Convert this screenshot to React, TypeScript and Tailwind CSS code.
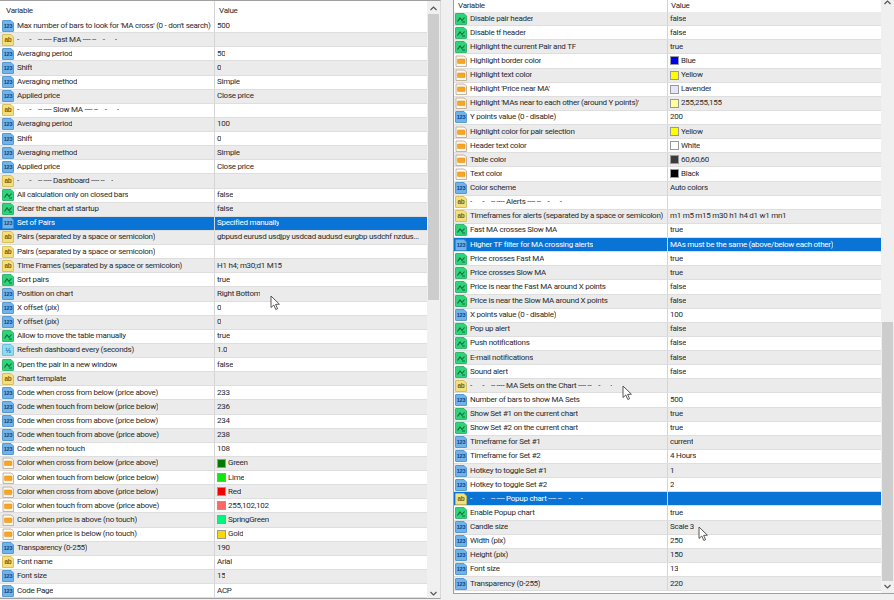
import React from "react";

type Kind = "n" | "a" | "b" | "c" | "d";
type Row = { k: Kind; t: string; v?: string; s?: string; sel?: boolean };

function Icon({ k }: { k: Kind }) {
  if (k === "c") {
    return (
      <svg width="12" height="12" viewBox="0 0 12 12" className="shrink-0">
        <path d="M1 1 H9 L11.5 3 V11.5 H1 Z" fill="#fbf6ee" stroke="#b9a489" strokeWidth=".8" />
        <rect x="2.5" y="4" width="7.5" height="4.5" rx=".5" fill="#f5a623" stroke="#e8881a" strokeWidth=".5" />
      </svg>
    );
  }
  const style = {
    n: { fill: "#6fb3e8", stroke: "#3f8cc9" },
    a: { fill: "#f3e07c", stroke: "#cdb64a" },
    b: { fill: "#2fd47a", stroke: "#1eaa5c" },
    d: { fill: "#8fdcf0", stroke: "#5bb8d6" },
  }[k];
  return (
    <svg width="12" height="12" viewBox="0 0 12 12" className="shrink-0">
      <path d="M.5 1 Q.5 .5 1 .5 H9 L11.5 3 V11 Q11.5 11.5 11 11.5 H1 Q.5 11.5 .5 11 Z" fill={style.fill} stroke={style.stroke} strokeWidth=".8" />
      {k === "b" && <path d="M2.5 8.5 L5 5 L7 7.5 L9.5 4.5 M7 9 H10" fill="none" stroke="#0b6b38" strokeWidth="1.1" />}
      {k === "n" && <text x="6" y="8.2" textAnchor="middle" fontSize="5.5" fontWeight="700" fill="#123f86" fontFamily="Liberation Sans, sans-serif">123</text>}
      {k === "a" && <text x="6" y="8.4" textAnchor="middle" fontSize="6.5" fontWeight="700" fill="#7a6212" fontFamily="Liberation Sans, sans-serif">ab</text>}
      {k === "d" && <text x="6" y="8.6" textAnchor="middle" fontSize="7" fontWeight="700" fill="#1f6fc4" fontFamily="Liberation Sans, sans-serif">½</text>}
    </svg>
  );
}

const left: Row[] = [
  { k: "n", t: "Max number of bars to look for 'MA cross' (0 - don't search)", v: "500" },
  { k: "a", t: "-      -    -- ---- Fast MA ---- --    -      -" },
  { k: "n", t: "Averaging period", v: "50" },
  { k: "n", t: "Shift", v: "0" },
  { k: "n", t: "Averaging method", v: "Simple" },
  { k: "n", t: "Applied price", v: "Close price" },
  { k: "a", t: "-      -    -- ---- Slow MA ---- --    -      -" },
  { k: "n", t: "Averaging period", v: "100" },
  { k: "n", t: "Shift", v: "0" },
  { k: "n", t: "Averaging method", v: "Simple" },
  { k: "n", t: "Applied price", v: "Close price" },
  { k: "a", t: "-      -    -- ---- Dashboard ---- --    -" },
  { k: "b", t: "All calculation only on closed bars", v: "false" },
  { k: "b", t: "Clear the chart at startup", v: "false" },
  { k: "n", t: "Set of Pairs", v: "Specified manually", sel: true },
  { k: "a", t: "Pairs (separated by a space or semicolon)", v: "gbpusd eurusd usdjpy usdcad audusd eurgbp usdchf nzdus..." },
  { k: "a", t: "Pairs (separated by a space or semicolon)" },
  { k: "a", t: "Time Frames (separated by a space or semicolon)", v: "H1 h4; m30;d1 M15" },
  { k: "b", t: "Sort pairs", v: "true" },
  { k: "n", t: "Position on chart", v: "Right Bottom" },
  { k: "n", t: "X offset (pix)", v: "0" },
  { k: "n", t: "Y offset (pix)", v: "0" },
  { k: "b", t: "Allow to move the table manually", v: "true" },
  { k: "d", t: "Refresh dashboard every (seconds)", v: "1.0" },
  { k: "b", t: "Open the pair in a new window", v: "false" },
  { k: "a", t: "Chart template" },
  { k: "n", t: "Code when cross from below (price above)", v: "233" },
  { k: "n", t: "Code when touch from below (price below)", v: "236" },
  { k: "n", t: "Code when cross from above (price below)", v: "234" },
  { k: "n", t: "Code when touch from above (price above)", v: "238" },
  { k: "n", t: "Code when no touch", v: "108" },
  { k: "c", t: "Color when cross from below (price above)", v: "Green", s: "#007a00" },
  { k: "c", t: "Color when touch from below (price below)", v: "Lime", s: "#12e612" },
  { k: "c", t: "Color when cross from above (price below)", v: "Red", s: "#f00000" },
  { k: "c", t: "Color when touch from above (price above)", v: "255,102,102", s: "#ff6666" },
  { k: "c", t: "Color when price is above (no touch)", v: "SpringGreen", s: "#00f57f" },
  { k: "c", t: "Color when price is below (no touch)", v: "Gold", s: "#ffd700" },
  { k: "n", t: "Transparency (0-255)", v: "190" },
  { k: "a", t: "Font name", v: "Arial" },
  { k: "n", t: "Font size", v: "15" },
  { k: "n", t: "Code Page", v: "ACP" },
];

const right: Row[] = [
  { k: "b", t: "Disable pair header", v: "false" },
  { k: "b", t: "Disable tf header", v: "false" },
  { k: "b", t: "Highlight the current Pair and TF", v: "true" },
  { k: "c", t: "Highlight border color", v: "Blue", s: "#0000f0" },
  { k: "c", t: "Highlight text color", v: "Yellow", s: "#ffff00" },
  { k: "c", t: "Highlight 'Price near MA'", v: "Lavender", s: "#e6e6fa" },
  { k: "c", t: "Highlight 'MAs near to each other (around Y points)'", v: "255,255,155", s: "#ffff9b" },
  { k: "n", t: "Y points value (0 - disable)", v: "200" },
  { k: "c", t: "Highlight color for pair selection", v: "Yellow", s: "#ffff00" },
  { k: "c", t: "Header text color", v: "White", s: "#ffffff" },
  { k: "c", t: "Table color", v: "60,60,60", s: "#3c3c3c" },
  { k: "c", t: "Text color", v: "Black", s: "#000000" },
  { k: "n", t: "Color scheme", v: "Auto colors" },
  { k: "a", t: "-      -    -- ---- Alerts ---- --    -      -" },
  { k: "a", t: "Timeframes for alerts (separated by a space or semicolon)", v: "m1 m5 m15 m30 h1 h4 d1 w1 mn1" },
  { k: "b", t: "Fast MA crosses Slow MA", v: "true" },
  { k: "n", t: "Higher TF filter for MA crossing alerts", v: "MAs must be the same (above/below each other)", sel: true },
  { k: "b", t: "Price crosses Fast MA", v: "true" },
  { k: "b", t: "Price crosses Slow MA", v: "true" },
  { k: "b", t: "Price is near the Fast MA around X points", v: "false" },
  { k: "b", t: "Price is near the Slow MA around X points", v: "false" },
  { k: "n", t: "X points value (0 - disable)", v: "100" },
  { k: "b", t: "Pop up alert", v: "false" },
  { k: "b", t: "Push notifications", v: "false" },
  { k: "b", t: "E-mail notifications", v: "false" },
  { k: "b", t: "Sound alert", v: "false" },
  { k: "a", t: "-      -    -- ---- MA Sets on the Chart ---- --    -      -" },
  { k: "n", t: "Number of bars to show MA Sets", v: "500" },
  { k: "b", t: "Show Set #1 on the current chart", v: "true" },
  { k: "b", t: "Show Set #2 on the current chart", v: "true" },
  { k: "n", t: "Timeframe for Set #1", v: "current" },
  { k: "n", t: "Timeframe for Set #2", v: "4 Hours" },
  { k: "n", t: "Hotkey to toggle Set #1", v: "1" },
  { k: "n", t: "Hotkey to toggle Set #2", v: "2" },
  { k: "a", t: "-      -    -- ---- Popup chart ---- --    -      -", sel: true },
  { k: "b", t: "Enable Popup chart", v: "true" },
  { k: "n", t: "Candle size", v: "Scale 3" },
  { k: "n", t: "Width (pix)", v: "250" },
  { k: "n", t: "Height (pix)", v: "150" },
  { k: "n", t: "Font size", v: "13" },
  { k: "n", t: "Transparency (0-255)", v: "220" },
];

function RowView({ r, gray, isRight }: { r: Row; gray: boolean; isRight: boolean }) {
  const bg = r.sel ? "bg-[#0a74d6] text-white" : gray ? "bg-[#ebebeb] text-[#2a2a2a]" : "bg-white text-[#2a2a2a]";
  return (
    <div className={`flex h-[14.125px] items-center overflow-hidden border-b border-[#dedede] ${bg}`}>
      <div className={`flex h-full shrink-0 items-center gap-[3px] ${isRight ? "w-[213px] pl-[1px]" : "w-[214px] pl-[2px]"}`}>
        <Icon k={r.k} />
        <span className="overflow-hidden whitespace-pre">{r.t}</span>
      </div>
      <div className="flex h-full min-w-0 flex-1 items-center gap-[2px] border-l border-[#d4d4d4] pl-[2px]">
        {r.s && <span className="h-[9px] w-[9px] shrink-0 border border-[#9a9a9a]" style={{ background: r.s }} />}
        <span className="overflow-hidden whitespace-pre">{r.v}</span>
      </div>
    </div>
  );
}

function Cursor({ x, y }: { x: number; y: number }) {
  return (
    <svg width="11" height="16" viewBox="0 0 11 16" className="absolute" style={{ left: x, top: y }}>
      <path d="M1 1 V12.5 L3.8 10 L5.8 14.5 L7.6 13.7 L5.6 9.4 L9.4 9.2 Z" fill="#ffffff" stroke="#444444" strokeWidth=".9" />
    </svg>
  );
}

export default function App() {
  return (
    <div className="relative flex h-[600px] w-[894px] overflow-hidden bg-[#f0f0f0] font-['Roboto',sans-serif] text-[8px] leading-none tracking-[-0.27px]">
      <div className="flex h-[599px] w-[441px] shrink-0 flex-col border-y border-r border-[#a0a0a0] border-r-[#d8d8d8]">
        <div className="flex min-h-0 flex-1">
          <div className="min-w-0 flex-1 bg-white">
            <div className="flex h-[18px] items-center text-[#2a2a2a]">
              <div className="w-[214px] pl-[6px] pt-[2px]">Variable</div>
              <div className="h-full flex-1 border-l border-[#d4d4d4] pl-[4px] pt-[6px]">Value</div>
            </div>
            {left.map((r, i) => <RowView key={i} r={r} gray={i % 2 === 1} isRight={false} />)}
          </div>
          <div className="flex w-[13px] shrink-0 flex-col items-center bg-[#f0f0f0]">
            <svg width="9" height="13" viewBox="0 0 9 13" className="shrink-0"><path d="M1.5 9 L4.5 6 L7.5 9" fill="none" stroke="#555" strokeWidth="1.2" /></svg>
            <div className="h-[286px] w-[11px] bg-[#cdcdcd]" />
            <div className="flex-1" />
            <svg width="9" height="10" viewBox="0 0 9 10" className="shrink-0"><path d="M1.5 4 L4.5 7 L7.5 4" fill="none" stroke="#555" strokeWidth="1.2" /></svg>
          </div>
        </div>
      </div>
      <div className="w-[12px] shrink-0" />
      <div className="flex h-[594px] min-w-0 flex-1 border-b border-l border-[#a0a0a0]">
        <div className="min-w-0 flex-1 bg-white">
          <div className="flex h-[12px] items-center text-[#2a2a2a]">
            <div className="w-[213px] pl-[4px]">Variable</div>
            <div className="flex h-full flex-1 items-center border-l border-[#d4d4d4] pl-[3px]">Value</div>
          </div>
          {right.map((r, i) => <RowView key={i} r={r} gray={i % 2 === 0} isRight />)}
        </div>
        <div className="flex w-[13px] shrink-0 flex-col items-center bg-[#f0f0f0]">
          <svg width="9" height="8" viewBox="0 0 9 8" className="shrink-0"><path d="M1.5 4 L4.5 1 L7.5 4" fill="none" stroke="#555" strokeWidth="1.2" /></svg>
          <div className="flex-1" />
          <div className="h-[259px] w-[11px] bg-[#cdcdcd]" />
          <svg width="9" height="12" viewBox="0 0 9 12" className="shrink-0"><path d="M1.5 4 L4.5 7 L7.5 4" fill="none" stroke="#555" strokeWidth="1.2" /></svg>
        </div>
      </div>
      <Cursor x={270} y={295} />
      <Cursor x={622} y={385} />
      <Cursor x={698} y={526} />
    </div>
  );
}
